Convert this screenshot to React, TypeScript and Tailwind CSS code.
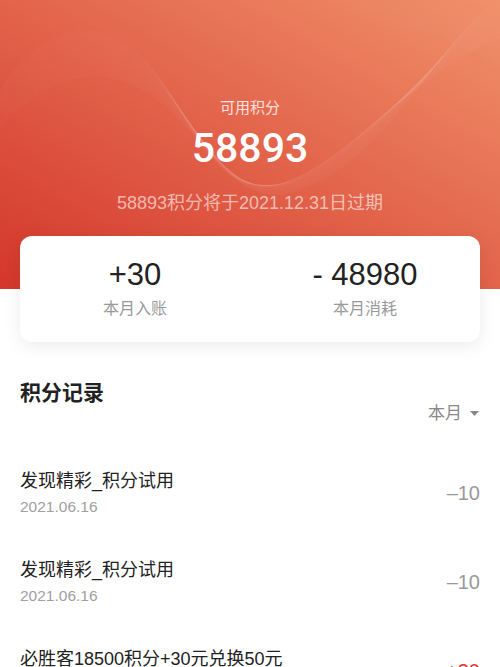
import React from "react";

const font = { fontFamily: '"Liberation Sans", "Noto Sans CJK SC", sans-serif' };

function lerp(a: number, b: number, t: number) {
  return a + (b - a) * t;
}

function Waves() {
  const A = [-10, 105, 35, 30, 90, 10, 140, 55, 190, 105, 205, 195, 275, 185, 345, 170, 420, 60, 520, 30];
  const B = [-10, 135, 60, 60, 120, 60, 175, 115, 230, 170, 250, 225, 330, 175, 410, 125, 450, 20, 520, -15];
  const N = 36;
  const paths: string[] = [];
  for (let i = 0; i < N; i++) {
    const t = i / (N - 1);
    const p = A.map((v, k) => lerp(v, B[k], t).toFixed(1));
    paths.push(
      `M${p[0]} ${p[1]} C${p[2]} ${p[3]} ${p[4]} ${p[5]} ${p[6]} ${p[7]} C${p[8]} ${p[9]} ${p[10]} ${p[11]} ${p[12]} ${p[13]} C${p[14]} ${p[15]} ${p[16]} ${p[17]} ${p[18]} ${p[19]}`
    );
  }
  const C = [330, -10, 400, 40, 440, 20, 520, 80];
  const D = [430, -10, 470, 10, 490, 30, 520, 20];
  const paths2: string[] = [];
  for (let i = 0; i < 20; i++) {
    const t = i / 19;
    const p = C.map((v, k) => lerp(v, D[k], t).toFixed(1));
    paths2.push(`M${p[0]} ${p[1]} C${p[2]} ${p[3]} ${p[4]} ${p[5]} ${p[6]} ${p[7]}`);
  }
  return (
    <svg className="absolute inset-0 pointer-events-none" width="500" height="289" viewBox="0 0 500 289">
      {paths.map((d, i) => (
        <path key={i} d={d} fill="none" stroke="white" strokeOpacity={0.045} strokeWidth={0.6} />
      ))}
      {paths2.map((d, i) => (
        <path key={"b" + i} d={d} fill="none" stroke="white" strokeOpacity={0.05} strokeWidth={0.6} />
      ))}
    </svg>
  );
}

const records = [
  { title: "发现精彩_积分试用", date: "2021.06.16", amount: "–10", red: false },
  { title: "发现精彩_积分试用", date: "2021.06.16", amount: "–10", red: false },
  { title: "必胜客18500积分+30元兑换50元", date: "2021.06.15", amount: "+30", red: true },
];

export default function App() {
  return (
    <div className="w-[500px] h-[667px] overflow-hidden bg-white" style={font}>
      <div className="relative h-[289px] bg-[linear-gradient(to_top_right,#d4372b,#f0906a)] overflow-hidden">
        <Waves />
        <div className="relative flex flex-col items-center pt-[97px] text-white">
          <div className="text-[15px] leading-[22px] text-white/80">可用积分</div>
          <div className="mt-[5px] text-[41px] leading-[48px] font-medium font-[Roboto,sans-serif]">58893</div>
          <div className="mt-[18px] text-[18px] leading-[26px] text-white/60">58893积分将于2021.12.31日过期</div>
        </div>
      </div>

      <div className="relative mx-[20px] -mt-[53px] rounded-[12px] bg-white shadow-[0_4px_18px_rgba(0,0,0,0.08)] grid grid-cols-2 pt-[19px] pb-[22px]">
        <div className="flex flex-col items-center">
          <div className="text-[31px] leading-[40px] text-[#222]">+30</div>
          <div className="mt-[3px] text-[16px] leading-[22px] text-[#999]">本月入账</div>
        </div>
        <div className="flex flex-col items-center">
          <div className="text-[31px] leading-[40px] text-[#222]">- 48980</div>
          <div className="mt-[3px] text-[16px] leading-[22px] text-[#999]">本月消耗</div>
        </div>
      </div>

      <div className="px-[20px]">
        <div className="mt-[37px] text-[21px] leading-[28px] font-semibold text-[#222]">积分记录</div>
        <div className="-mt-[5px] flex justify-end items-center gap-[8px] text-[17px] leading-[24px] text-[#888]">
          <span>本月</span>
          <svg width="9" height="6" viewBox="0 0 9 6" className="mr-[1px]">
            <path d="M0 0 L9 0 L4.5 5 Z" fill="#888" />
          </svg>
        </div>
        <div className="mt-[22px] flex flex-col">
          {records.map((r, i) => (
            <div key={i} className="h-[89px] flex items-center justify-between">
              <div className="flex flex-col">
                <div className="text-[18px] leading-[26px] text-[#222]">{r.title}</div>
                <div className="mt-[2px] text-[15.5px] leading-[22px] text-[#a0a0a0]">{r.date}</div>
              </div>
              <div className={"text-[20px] leading-[26px] " + (r.red ? "text-[#e8352b]" : "text-[#999]")}>{r.amount}</div>
            </div>
          ))}
        </div>
      </div>
    </div>
  );
}
